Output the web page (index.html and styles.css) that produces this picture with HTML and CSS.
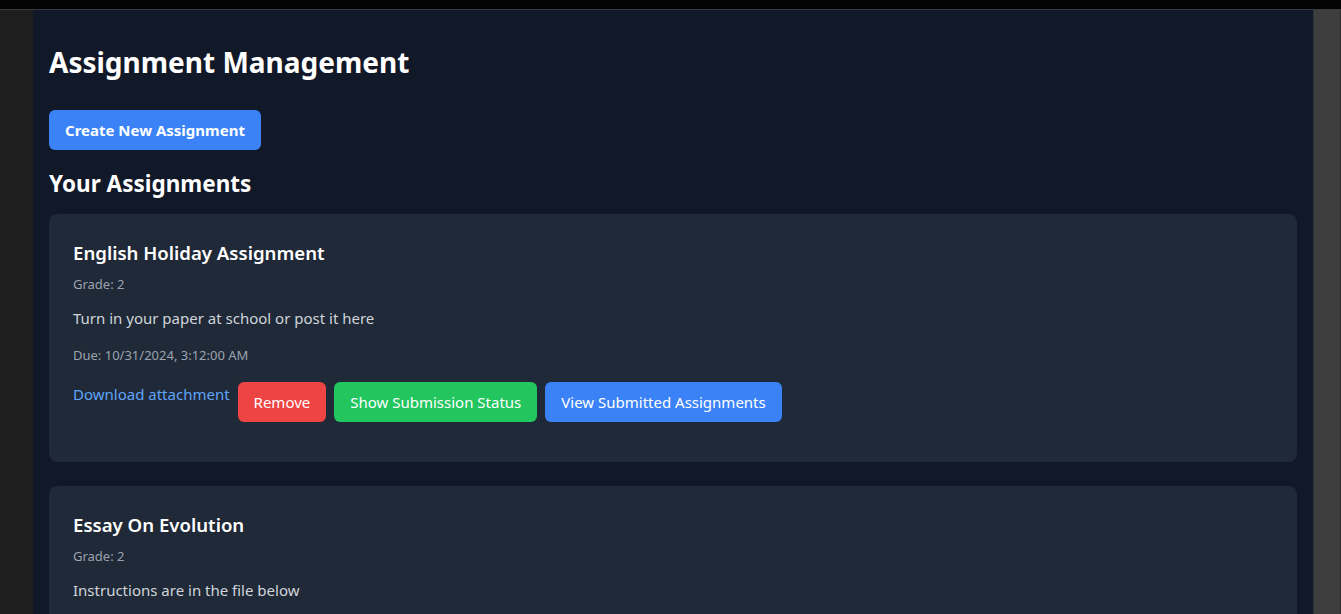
FILE: index.html
```html
<!DOCTYPE html>
<html lang="en">
<head>
<meta charset="utf-8">
<title>Assignment Management</title>
<link rel="stylesheet" href="styles.css">
</head>
<body>
<div class="topbar"></div>
<div class="frame">
  <div class="gutter"></div>
  <main class="main">
    <h1 class="page-title">Assignment Management</h1>
    <button class="btn btn-create">Create New Assignment</button>
    <h2 class="section-title">Your Assignments</h2>
    <div class="list">
      <article class="card">
        <h3 class="card-title">English Holiday Assignment</h3>
        <p class="meta grade">Grade: 2</p>
        <p class="desc">Turn in your paper at school or post it here</p>
        <p class="meta due">Due: 10/31/2024, 3:12:00 AM</p>
        <div class="actions">
          <a class="link" href="#">Download attachment</a>
          <button class="btn btn-red">Remove</button>
          <button class="btn btn-green">Show Submission Status</button>
          <button class="btn btn-blue">View Submitted Assignments</button>
        </div>
      </article>
      <article class="card">
        <h3 class="card-title">Essay On Evolution</h3>
        <p class="meta grade">Grade: 2</p>
        <p class="desc">Instructions are in the file below</p>
        <p class="meta due">Due: 11/15/2024, 9:00:00 AM</p>
        <div class="actions">
          <a class="link" href="#">Download attachment</a>
          <button class="btn btn-red">Remove</button>
          <button class="btn btn-green">Show Submission Status</button>
          <button class="btn btn-blue">View Submitted Assignments</button>
        </div>
      </article>
    </div>
  </main>
  <div class="scroll"></div>
</div>
</body>
</html>
```
FILE: styles.css
```css
* { box-sizing: border-box; }
html, body {
  margin: 0;
  height: 614px;
  overflow: hidden;
  background: #111827;
  font-family: "Noto Sans", "Open Sans", sans-serif;
}
.topbar {
  height: 10px;
  background: #030303;
  border-bottom: 1px solid #363b44;
}
.frame {
  display: flex;
  height: 604px;
}
.gutter {
  width: 33px;
  flex: none;
  background: #1e1e1e;
}
.scroll {
  width: 28px;
  flex: none;
  background: #3e3e3e;
  border-left: 1px solid #2f343c;
  border-right: 1px solid #2d2d2d;
}
.main {
  width: 1280px;
  flex: none;
  background: #111827;
  padding: 16px 16px 0;
  color: #fff;
}
.page-title {
  margin: 18px 0 30px;
  font-size: 28px;
  line-height: 36px;
  font-weight: 700;
  color: #fff;
}
.btn {
  border: 0;
  border-radius: 6px;
  color: #fff;
  font-family: inherit;
  font-size: 15px;
  line-height: 24px;
  padding: 8px 16px;
  cursor: pointer;
}
.btn-create {
  background: #3b82f6;
  font-weight: 700;
  font-size: 15px;
  padding: 8px 16px;
  height: 40px;
}
.section-title {
  margin: 18px 0 14px;
  font-size: 22.5px;
  line-height: 32px;
  font-weight: 700;
}
.list {
  display: flex;
  flex-direction: column;
  gap: 24px;
}
.card {
  background: #1f2937;
  border-radius: 8px;
  padding: 25px 24px 40px;
}
.card-title {
  margin: 0;
  font-size: 18.6px;
  line-height: 28px;
  font-weight: 600;
  color: #fff;
}
.meta {
  margin: 0;
  font-size: 13px;
  line-height: 20px;
  color: #9ca3af;
}
.grade { margin-top: 7px; }
.desc {
  margin: 12px 0 0;
  font-size: 15px;
  line-height: 24px;
  color: #d1d5db;
}
.due { margin-top: 15px; }
.actions {
  display: flex;
  align-items: flex-start;
  gap: 8px;
  margin-top: 17px;
}
.link {
  color: #60a5fa;
  text-decoration: none;
  font-size: 15px;
  line-height: 24px;
}
.btn-red { background: #ef4444; }
.btn-green { background: #22c55e; }
.btn-blue { background: #3b82f6; }
```
